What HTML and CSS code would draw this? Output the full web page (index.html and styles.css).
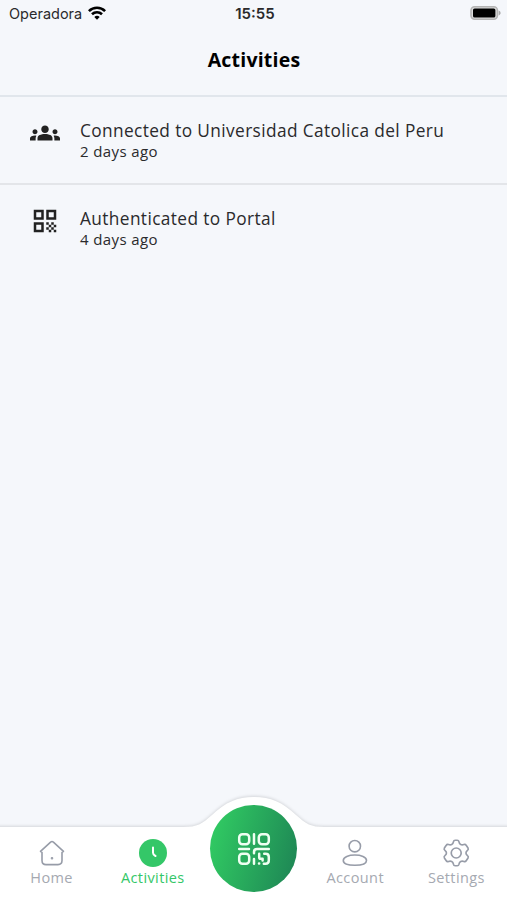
FILE: index.html
```html
<!DOCTYPE html>
<html lang="en">

<head>
    <meta charset="UTF-8">
    <meta name="viewport" content="width=device-width, initial-scale=1.0">
    <title>Activities</title>
    <link rel="stylesheet" href="styles.css">
</head>

<body>
    <div class="app">
        <div class="status">
            <div class="carrier">
                <span>Operadora</span>
                <svg class="wifi" width="18" height="14" viewBox="0 0 18 14" fill="none" stroke="#000" stroke-width="2.6">
                    <path d="M.9 5.1a11.6 11.6 0 0 1 16.2 0"/>
                    <path d="M4 8.3a7.2 7.2 0 0 1 10 0"/>
                    <path d="M9 13.8 6.3 11a3.9 3.9 0 0 1 5.4 0z" fill="#000" stroke="none"/>
                </svg>
            </div>
            <div class="time">15:55</div>
            <div class="battery">
                <svg width="31" height="14" viewBox="0 0 31 14">
                    <rect x="1" y=".8" width="26.4" height="12.4" rx="3.6" fill="#ddd" stroke="#b4b4b4" stroke-width="1.6"/>
                    <rect x="3" y="2.4" width="22.400" height="9.2" rx="1.6" fill="#000"/>
                    <path d="M28.600 4.600c1.400.6 2 1.400 2 2.400s-.6 1.800-2 2.400z" fill="#aaa"/>
                </svg>
            </div>
        </div>
        <header class="header">
            <h1>Activities</h1>
        </header>

        <main class="list">
            <div class="item">
                <svg class="item-icon" viewBox="0 0 24 24">
                    <path d="M12 12.75c1.63 0 3.07.39 4.24.9 1.08.48 1.76 1.56 1.76 2.73V18H6v-1.61c0-1.18.68-2.26 1.76-2.73 1.17-.52 2.61-.91 4.24-.91zM4 13c1.1 0 2-.9 2-2s-.9-2-2-2-2 .9-2 2 .9 2 2 2zm1.13 1.1c-.37-.06-.74-.1-1.13-.1-.99 0-1.93.21-2.78.58C.48 14.9 0 15.62 0 16.43V18h4.5v-1.61c0-.83.23-1.61.63-2.29zM20 13c1.1 0 2-.9 2-2s-.9-2-2-2-2 .9-2 2 .9 2 2 2zm4 3.43c0-.81-.48-1.53-1.22-1.85-.85-.37-1.79-.58-2.78-.58-.39 0-.76.04-1.13.1.4.68.63 1.46.63 2.29V18H24v-1.57zM12 6c1.66 0 3 1.34 3 3s-1.34 3-3 3-3-1.34-3-3 1.34-3 3-3z"/>
                </svg>
                <div>
                    <p class="item-title">Connected to Universidad Catolica del Peru</p>
                    <p class="item-date">2 days ago</p>
                </div>
            </div>
            <div class="item">
                <svg class="item-icon" viewBox="0 0 24 24">
                    <path d="M3 11h8V3H3v8zm2-6h4v4H5V5zM3 21h8v-8H3v8zm2-6h4v4H5v-4zM13 3v8h8V3h-8zm6 6h-4V5h4v4zM19 19h2v2h-2zM13 13h2v2h-2zM15 15h2v2h-2zM13 17h2v2h-2zM15 19h2v2h-2zM17 17h2v2h-2zM17 13h2v2h-2zM19 15h2v2h-2z"/>
                </svg>
                <div>
                    <p class="item-title">Authenticated to Portal</p>
                    <p class="item-date">4 days ago</p>
                </div>
            </div>
        </main>

        <nav class="tabbar">
            <!-- raised part of the bar behind the scan button -->
            <svg class="hump" width="507" height="50" viewBox="0 0 507 50">
                <path d="M-9 115V40Q-9 33 0 33H184C197 33 202 30 212 21C226 8 237 3 254 3S282 8 296 21C306 30 311 33 324 33H507Q516 33 516 40V115z" fill="#fff"/>
            </svg>
            <a class="tab">
                <svg width="28" height="28" viewBox="0 0 28 28" fill="none" stroke="#979ca8" stroke-width="1.6" stroke-linecap="round" stroke-linejoin="round">
                    <path d="M2.500 12.300 12.600 3.100q1.400-1.100 2.800 0l10.100 9.200-1.500 1.100v8.200q0 4-4 4H8q-4 0-4-4v-8.200z"/>
                    <circle cx="14" cy="19.200" r=".5" fill="#979ca8"/>
                </svg>
                <span>Home</span>
            </a>
            <a class="tab active">
                <svg width="28" height="28" viewBox="0 0 28 28">
                    <circle cx="14" cy="14" r="14" fill="#34c768"/>
                    <path d="M14 8.500v5.200q0 2 2.500 3.300" fill="none" stroke="#fff" stroke-width="2" stroke-linecap="round"/>
                </svg>
                <span>Activities</span>
            </a>
            <div class="tab">
                <button class="scan" aria-label="Scan">
                    <svg width="34" height="34" viewBox="0 0 34 34" fill="none" stroke="#effff1" stroke-width="2.500" stroke-linecap="round" stroke-linejoin="round">
                        <rect x="2.200" y="2.200" width="10" height="10" rx="3.200"/>
                        <rect x="21.800" y="2.200" width="10" height="10" rx="3.200"/>
                        <rect x="2.200" y="21.800" width="10" height="10" rx="3.200"/>
                        <path d="M17 2.200v9.600M2.200 17H12M17 21.200V20q0-3 3-3h11.800M17 27v4.800M22.200 21.800v3.400q0 1.600 1.600 1.600h1.800v1.800M22 31.600h.2M27.200 21.800h1.400q3.200 0 3.200 3.200v3.600q0 3.200-3.200 3.200h-1.800"/>
                    </svg>
                </button>
            </div>
            <a class="tab">
                <svg width="28" height="28" viewBox="0 0 28 28" fill="none" stroke="#979ca8" stroke-width="1.600">
                    <circle cx="13.800" cy="7.200" r="5.700"/>
                    <path d="M2.300 21.400c0-3.400 5.400-5.400 11.600-5.400s11.600 2 11.600 5.400c0 3.200-3.600 4.900-11.600 4.900S2.300 24.600 2.300 21.400z"/>
                </svg>
                <span>Account</span>
            </a>
            <a class="tab">
                <svg width="28" height="28" viewBox="0.500 0.500 27 27" fill="none" stroke="#979ca8" stroke-width="1.600" stroke-linejoin="round">
                    <circle cx="14.200" cy="14" r="4.800"/>
                    <path d="M11.500 3.200q.3-1.500 1.700-1.500h2q1.400 0 1.700 1.500c.4 2.500 2.400 3.500 4.700 2.600q1.500-.5 2.200.7l1.800 2.700q.7 1.300-.5 2.200c-2 1.600-2 3.600 0 5.200q1.200.9.5 2.200l-1.800 2.700q-.7 1.200-2.200.7c-2.300-.9-4.300.1-4.700 2.600q-.3 1.500-1.700 1.500h-2q-1.400 0-1.700-1.500c-.4-2.500-2.400-3.500-4.700-2.600q-1.500.5-2.200-.7l-1.800-2.700q-.7-1.300.5-2.200c2-1.600 2-3.600 0-5.200q-1.200-.9-.5-2.200l1.800-2.700q.7-1.200 2.200-.7c2.300.9 4.300-.1 4.700-2.600z"/>
                </svg>
                <span>Settings</span>
            </a>
        </nav>
    </div>
</body>

</html>
```
FILE: styles.css
```css
* {
    box-sizing: border-box;
}

body {
    margin: 0;
    background: #f5f7fb;
    font-family: "Open Sans", sans-serif;
    color: #2a2a2c;
    overflow: hidden;
}

h1,
p {
    margin: 0;
}

.app {
    height: 100vh;
    display: flex;
    flex-direction: column;
}

.status {
    height: 27px;
    padding: 0 6px 0 9px;
    display: grid;
    grid-template-columns: 1fr auto 1fr;
    align-items: center;
    font-family: Inter, sans-serif;
    font-size: 14.5px;
}

.carrier {
    display: flex;
    align-items: center;
    gap: 6px;
}

.wifi {
    margin-bottom: 2px;
}

.time {
    font-size: 15px;
    font-weight: 600;
}

.battery {
    display: flex;
    justify-content: flex-end;
    margin-top: -1px;
}

.header {
    height: 70px;
    padding-bottom: 3px;
    display: flex;
    align-items: center;
    justify-content: center;
    border-bottom: 2px solid #e1e6ec;
}

.header h1 {
    padding-left: 1px;
    font-size: 19.5px;
    font-weight: 700;
    letter-spacing: 0.2px;
    color: #000;
}

.list {
    flex: 1;
}

.item {
    height: 88px;
    padding: 21px 30px 0;
    display: flex;
    gap: 20px;
}

.item + .item {
    border-top: 2px solid #e3e5e9;
    margin-top: -2px;
}

.item-icon {
    width: 30px;
    height: 30px;
    fill: #222;
}

.item-title {
    font-size: 17.3px;
    line-height: 25px;
    letter-spacing: 0.38px;
    white-space: nowrap;
}

.item-date {
    margin-top: -2px;
    font-size: 15px;
    line-height: 20px;
    letter-spacing: 0.4px;
}

.tabbar {
    position: relative;
    height: 73px;
    background: #fff;
    display: grid;
    grid-template-columns: repeat(5, 1fr);
    padding-left: 1px;
}

.hump {
    position: absolute;
    left: 0;
    top: -33px;
    overflow: visible;
    filter: drop-shadow(0 -1px 1.5px rgba(0, 0, 0, 0.13));
}

.tab {
    position: relative;
    padding-top: 12px;
    display: flex;
    flex-direction: column;
    align-items: center;
    font-size: 14.5px;
    line-height: 21px;
    letter-spacing: 0.4px;
    color: #a5a9b1;
}

.active {
    color: #34c768;
}

.scan {
    position: absolute;
    top: -22px;
    width: 87px;
    height: 87px;
    padding: 0;
    border: none;
    border-radius: 50%;
    display: flex;
    align-items: center;
    justify-content: center;
    background: linear-gradient(105deg, #30c862 10%, #1e8655 95%);
}
```
